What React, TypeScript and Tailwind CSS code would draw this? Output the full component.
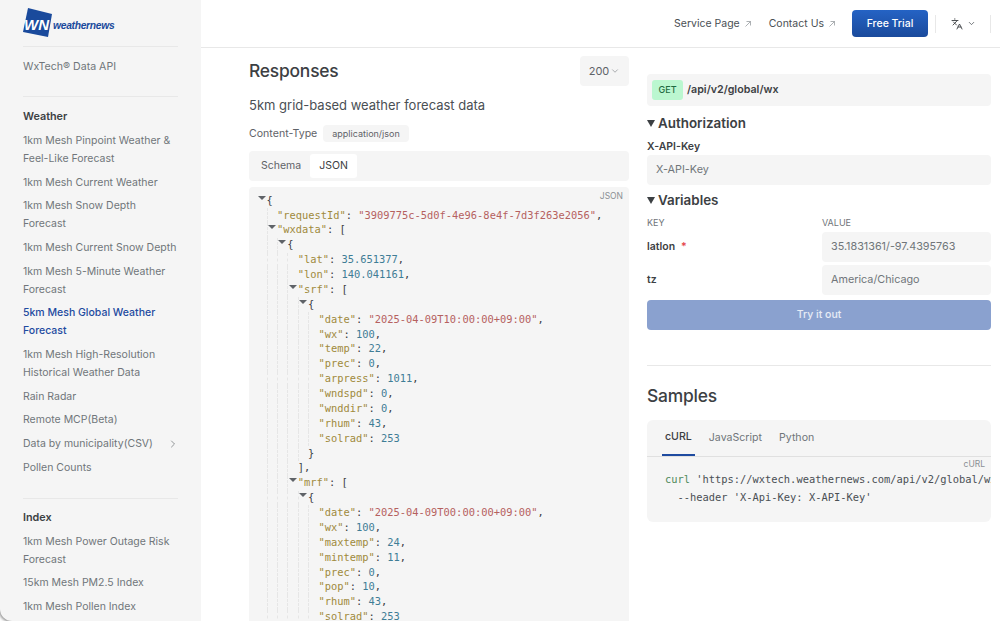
import React from "react";
import { ChevronDown, ChevronRight, Languages } from "lucide-react";

type Nav = { label: string; active?: boolean; arrow?: boolean };

const weather: Nav[] = [
  { label: "1km Mesh Pinpoint Weather & Feel-Like Forecast" },
  { label: "1km Mesh Current Weather" },
  { label: "1km Mesh Snow Depth Forecast" },
  { label: "1km Mesh Current Snow Depth" },
  { label: "1km Mesh 5-Minute Weather Forecast" },
  { label: "5km Mesh Global Weather Forecast", active: true },
  { label: "1km Mesh High-Resolution Historical Weather Data" },
  { label: "Rain Radar" },
  { label: "Remote MCP(Beta)" },
  { label: "Data by municipality(CSV)", arrow: true },
  { label: "Pollen Counts" },
];

const index: Nav[] = [
  { label: "1km Mesh Power Outage Risk Forecast" },
  { label: "15km Mesh PM2.5 Index" },
  { label: "1km Mesh Pollen Index" },
];

function NavList({ items }: { items: Nav[] }) {
  return (
    <ul>
      {items.map((item) => (
        <li
          key={item.label}
          className={`flex items-center justify-between py-[3px] text-[10.5px] leading-[17.8px] ${
            item.active ? "font-medium text-[#1e4ba0]" : "text-[#70757a]"
          }`}
        >
          <span>{item.label}</span>
          {item.arrow && <ChevronRight className="-mr-[1px] h-[12px] w-[12px] shrink-0" strokeWidth={1.5} />}
        </li>
      ))}
    </ul>
  );
}

function Sidebar() {
  return (
    <div className="h-[621px] w-[201px] shrink-0 overflow-hidden bg-white">
      <aside className="h-full overflow-hidden rounded-bl-[12px] bg-[#f5f5f5] px-[23px] shadow-[-1px_1px_3px_rgba(0,0,0,0.45)]">
        <div className="relative h-[47px] border-b border-[#e8e8e8]">
          <svg width="30" height="30" viewBox="0 0 30 30" className="absolute left-0 top-[8px]">
            <polygon points="5,0 29,6 25,29 0,24" fill="#1a4a9c" />
            <text x="1" y="22" fontFamily="Liberation Sans, sans-serif" fontSize="14" fontWeight="700" fontStyle="italic" fill="#fff" textLength="25" lengthAdjust="spacingAndGlyphs">WN</text>
          </svg>
          <span className="absolute left-[30px] top-[19px] font-['Liberation_Sans',sans-serif] text-[10.3px] font-bold italic leading-[14px] tracking-[-0.3px] text-[#1a4a9c]">weathernews</span>
        </div>
        <div className="h-[50px] border-b border-[#e8e8e8] pt-[11px] text-[10.6px] leading-[18px] text-[#70757a]">WxTech® Data API</div>
        <div className="border-b border-[#e8e8e8] pb-[18px] pt-[11px]">
          <div className="text-[10.8px] font-semibold leading-[18px] text-[#3c4043]">Weather</div>
          <div className="pt-[3px]"><NavList items={weather} /></div>
        </div>
        <div className="pt-[10px]">
          <div className="text-[10.8px] font-semibold leading-[18px] text-[#3c4043]">Index</div>
          <div className="pt-[3px]"><NavList items={index} /></div>
        </div>
      </aside>
    </div>
  );
}

function ExternalArrow() {
  return (
    <svg width="6" height="6" viewBox="0 0 6 6" fill="none" stroke="#8a8f94" strokeWidth="0.7" className="ml-[5px]">
      <path d="M0.5 5.5 L5.5 0.5 M1.5 0.5 H5.5 V4.5" />
    </svg>
  );
}

function Header() {
  return (
    <header className="flex h-[48px] items-center justify-end border-b border-[#e8e8e8] bg-white pr-[9px] text-[10.5px] text-[#4a4f54]">
      <span className="flex items-center">Service Page<ExternalArrow /></span>
      <span className="ml-[18px] flex items-center">Contact Us<ExternalArrow /></span>
      <button className="ml-[17px] h-[27px] w-[76px] rounded-[4px] bg-gradient-to-b from-[#2563c4] to-[#1a4a9c] text-[10.5px] font-medium text-white">Free Trial</button>
      <span className="ml-[7px] h-[18px] border-l border-[#e8e8e8]" />
      <Languages className="ml-[15px] h-[12px] w-[12px]" strokeWidth={1.8} color="#3c4043" />
      <ChevronDown className="ml-[4px] h-[9px] w-[9px]" strokeWidth={2} color="#4a4f54" />
      <span className="ml-[14px] h-[18px] border-l border-[#e8e8e8]" />
    </header>
  );
}

type Line = { d: number; t?: boolean; k?: string; s?: string; n?: string; p?: string };

const json: Line[] = [
  { d: 0, t: true, p: "{" },
  { d: 1, k: "requestId", s: "3909775c-5d0f-4e96-8e4f-7d3f263e2056", p: "," },
  { d: 1, t: true, k: "wxdata", p: "[" },
  { d: 2, t: true, p: "{" },
  { d: 3, k: "lat", n: "35.651377", p: "," },
  { d: 3, k: "lon", n: "140.041161", p: "," },
  { d: 3, t: true, k: "srf", p: "[" },
  { d: 4, t: true, p: "{" },
  { d: 5, k: "date", s: "2025-04-09T10:00:00+09:00", p: "," },
  { d: 5, k: "wx", n: "100", p: "," },
  { d: 5, k: "temp", n: "22", p: "," },
  { d: 5, k: "prec", n: "0", p: "," },
  { d: 5, k: "arpress", n: "1011", p: "," },
  { d: 5, k: "wndspd", n: "0", p: "," },
  { d: 5, k: "wnddir", n: "0", p: "," },
  { d: 5, k: "rhum", n: "43", p: "," },
  { d: 5, k: "solrad", n: "253" },
  { d: 4, p: "}" },
  { d: 3, p: "]," },
  { d: 3, t: true, k: "mrf", p: "[" },
  { d: 4, t: true, p: "{" },
  { d: 5, k: "date", s: "2025-04-09T00:00:00+09:00", p: "," },
  { d: 5, k: "wx", n: "100", p: "," },
  { d: 5, k: "maxtemp", n: "24", p: "," },
  { d: 5, k: "mintemp", n: "11", p: "," },
  { d: 5, k: "prec", n: "0", p: "," },
  { d: 5, k: "pop", n: "10", p: "," },
  { d: 5, k: "rhum", n: "43", p: "," },
  { d: 5, k: "solrad", n: "253" },
];

function JsonRow({ line }: { line: Line }) {
  return (
    <div className="flex h-[14.88px] items-center whitespace-pre">
      {Array.from({ length: line.d }).map((_, i) => (
        <span key={i} className="h-full w-[10.4px] shrink-0 border-l border-dashed border-[#e6e6e6]" />
      ))}
      <span className="relative">
        {line.t && <span className="absolute left-[-9px] top-[3px] h-0 w-0 border-x-[4px] border-t-[4px] border-x-transparent border-t-[#5f6368]" />}
        {line.k && <span className="text-[#a08a3c]">"{line.k}"</span>}
        {line.k && <span className="text-[#3c4043]">: </span>}
        {line.s && <span className="text-[#b5615f]">"{line.s}"</span>}
        {line.n && <span className="text-[#3f7d96]">{line.n}</span>}
        {line.p && <span className="text-[#3c4043]">{line.p}</span>}
      </span>
    </div>
  );
}

function Responses() {
  return (
    <section className="w-[380px] shrink-0">
      <div className="flex h-[30px] items-center justify-between">
        <h2 className="text-[17.4px] font-medium leading-[30px] tracking-[-0.2px] text-[#3c4043]">Responses</h2>
        <div className="flex h-[30px] w-[49px] items-center justify-center gap-[1px] rounded-[4px] bg-[#f5f5f5] text-[11px] text-[#5f6368]">
          200<ChevronDown className="h-[10px] w-[10px]" strokeWidth={1.2} />
        </div>
      </div>
      <p className="mt-[9px] text-[13px] leading-[20px] text-[#4a4f54]">5km grid-based weather forecast data</p>
      <div className="mt-[10px] flex items-center">
        <span className="text-[10.6px] text-[#5f6368]">Content-Type</span>
        <span className="ml-[6px] flex h-[17px] items-center rounded-[4px] bg-[#f5f5f5] px-[9px] text-[9px] text-[#5f6368]">application/json</span>
      </div>
      <div className="mt-[9px] flex h-[30px] items-center rounded-[4px] bg-[#f5f5f5] px-[3px]">
        <span className="px-[9px] text-[10.5px] text-[#5f6368]">Schema</span>
        <span className="flex h-[24px] items-center rounded-[3px] bg-white px-[9px] text-[10.5px] text-[#3c4043]">JSON</span>
      </div>
      <div className="relative mt-[6px] h-[440px] overflow-hidden rounded-t-[4px] bg-[#f5f5f5] pl-[17.5px] pt-[6px] font-['DejaVu_Sans_Mono',monospace] text-[10.4px]">
        <span className="absolute right-[6px] top-[3px] font-['Inter',sans-serif] text-[8.5px] text-[#8a8f94]">JSON</span>
        {json.map((line, i) => (
          <JsonRow key={i} line={line} />
        ))}
      </div>
    </section>
  );
}

function Field({ value }: { value: string }) {
  return (
    <div className="flex h-[30px] items-center rounded-[4px] bg-[#f5f5f5] px-[9px] text-[10.8px] font-normal text-[#70757a]">{value}</div>
  );
}

function Heading({ children }: { children: React.ReactNode }) {
  return (
    <div className="flex items-center text-[13.4px] font-semibold leading-[18px] text-[#3c4043]">
      <span className="mr-[3px] h-0 w-0 border-x-[4px] border-t-[7px] border-x-transparent border-t-[#3c4043]" />
      {children}
    </div>
  );
}

function Console() {
  return (
    <section className="w-[344px] shrink-0">
      <div className="flex h-[32px] items-center rounded-[4px] bg-[#f5f5f5] pl-[5px]">
        <span className="flex h-[20px] w-[31px] items-center justify-center rounded-[3px] bg-[#bbf7d0] text-[9px] font-medium text-[#1f6b3f]">GET</span>
        <span className="ml-[4px] text-[10.7px] font-semibold text-[#3c4043]">/api/v2/global/wx</span>
      </div>
      <div className="mt-[8px]"><Heading>Authorization</Heading></div>
      <div className="mt-[7px] text-[10.5px] font-semibold leading-[16px] text-[#3c4043]">X-API-Key</div>
      <div><Field value="X-API-Key" /></div>
      <div className="mt-[6px]"><Heading>Variables</Heading></div>
      <div className="mt-[7px] grid grid-cols-[175px_169px] text-[9px] leading-[14px] text-[#70757a]">
        <span>KEY</span>
        <span>VALUE</span>
      </div>
      <div className="mt-[2px] grid grid-cols-[175px_169px] items-center gap-y-[3px] text-[10.5px] font-semibold text-[#3c4043]">
        <span>latlon<span className="ml-[6px] text-[#e5484d]">*</span></span>
        <Field value="35.1831361/-97.4395763" />
        <span>tz</span>
        <Field value="America/Chicago" />
      </div>
      <button className="mt-[5px] h-[30px] w-full rounded-[4px] bg-[#8aa1cf] text-[10.5px] font-medium text-white/80">Try it out</button>
      <hr className="mt-[35px] border-[#e8e8e8]" />
      <h2 className="mt-[19px] text-[17.4px] font-medium leading-[22px] tracking-[-0.2px] text-[#3c4043]">Samples</h2>
      <div className="mt-[13px] h-[102px] overflow-hidden rounded-[6px] bg-[#f5f5f5]">
        <div className="flex h-[37px] items-stretch gap-[11px] border-b border-[#e0e0e0] pl-[15px] text-[10.6px] text-[#70757a]">
          <span className="flex items-center border-b-2 border-[#1e4ba0] px-[3px] font-medium text-[#3c4043]">cURL</span>
          <span className="flex items-center px-[3px]">JavaScript</span>
          <span className="flex items-center px-[3px]">Python</span>
        </div>
        <div className="relative whitespace-pre pl-[18px] pt-[13px] font-['DejaVu_Sans_Mono',monospace] text-[10.4px] leading-[18px] text-[#4a4f54]">
          <span className="absolute right-[6px] top-[1px] font-['Inter',sans-serif] text-[8.5px] leading-[12px] text-[#8a8f94]">cURL</span>
          <div><span className="text-[#4f8a5b]">curl</span> 'https://wxtech.weathernews.com/api/v2/global/wx</div>
          <div>  --header 'X-Api-Key: X-API-Key'</div>
        </div>
      </div>
    </section>
  );
}

export default function App() {
  return (
    <div className="flex h-[621px] w-[1000px] overflow-hidden bg-white font-['Inter',sans-serif]">
      <Sidebar />
      <div className="min-w-0 flex-1">
        <Header />
        <main className="flex gap-[18px] pl-[48px] pt-[8px]">
          <Responses />
          <div className="pt-[18px]"><Console /></div>
        </main>
      </div>
    </div>
  );
}
